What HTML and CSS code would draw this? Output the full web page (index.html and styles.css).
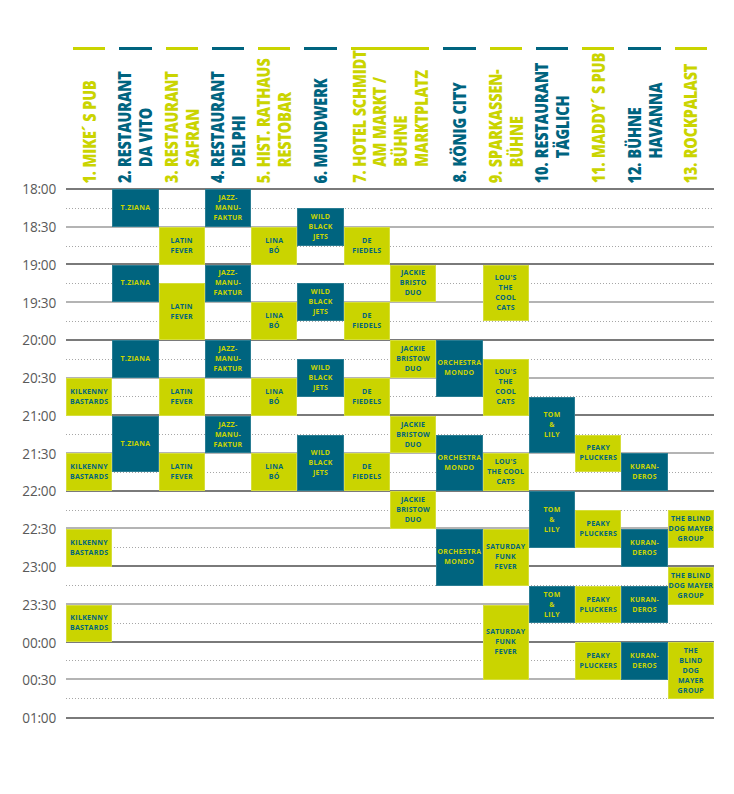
FILE: index.html
```html
<!DOCTYPE html>
<html lang="de">
<head>
<meta charset="utf-8">
<title>Programm</title>
<link rel="stylesheet" href="styles.css">
</head>
<body>
<div class="page">
  <div class="heads">
    <div class="corner"></div>
    <div class="venue y"><div class="bar"></div><div class="title"><div class="vt"><span class="n">1.</span><span class="nm">MIKE´ S PUB</span></div></div></div>
    <div class="venue b"><div class="bar"></div><div class="title"><div class="vt"><span class="n">2.</span><span class="nm">RESTAURANT<br>DA VITO</span></div></div></div>
    <div class="venue y"><div class="bar"></div><div class="title"><div class="vt"><span class="n">3.</span><span class="nm">RESTAURANT<br>SAFRAN</span></div></div></div>
    <div class="venue b"><div class="bar"></div><div class="title"><div class="vt"><span class="n">4.</span><span class="nm">RESTAURANT<br>DELPHI</span></div></div></div>
    <div class="venue y"><div class="bar"></div><div class="title"><div class="vt"><span class="n">5.</span><span class="nm">HIST. RATHAUS<br>RESTOBAR</span></div></div></div>
    <div class="venue b"><div class="bar"></div><div class="title"><div class="vt"><span class="n">6.</span><span class="nm">MUNDWERK</span></div></div></div>
    <div class="venue y wide"><div class="bar"></div><div class="title"><div class="vt"><span class="n">7.</span><span class="nm">HOTEL SCHMIDT<br>AM MARKT /<br>BÜHNE<br>MARKTPLATZ</span></div></div></div>
    <div class="venue b"><div class="bar"></div><div class="title"><div class="vt"><span class="n">8.</span><span class="nm">KÖNIG CITY</span></div></div></div>
    <div class="venue y"><div class="bar"></div><div class="title"><div class="vt"><span class="n">9.</span><span class="nm">SPARKASSEN-<br>BÜHNE</span></div></div></div>
    <div class="venue b"><div class="bar"></div><div class="title"><div class="vt"><span class="n">10.</span><span class="nm">RESTAURANT<br>TÄGLICH</span></div></div></div>
    <div class="venue y"><div class="bar"></div><div class="title"><div class="vt"><span class="n">11.</span><span class="nm">MADDY´ S PUB</span></div></div></div>
    <div class="venue b"><div class="bar"></div><div class="title"><div class="vt"><span class="n">12.</span><span class="nm">BÜHNE<br>HAVANNA</span></div></div></div>
    <div class="venue y"><div class="bar"></div><div class="title"><div class="vt"><span class="n">13.</span><span class="nm">ROCKPALAST</span></div></div></div>
  </div>

  <div class="main">
    <div class="times">
      <div class="t">18:00</div><div class="t">18:30</div><div class="t">19:00</div><div class="t">19:30</div>
      <div class="t">20:00</div><div class="t">20:30</div><div class="t">21:00</div><div class="t">21:30</div>
      <div class="t">22:00</div><div class="t">22:30</div><div class="t">23:00</div><div class="t">23:30</div>
      <div class="t">00:00</div><div class="t">00:30</div><div class="t">01:00</div>
    </div>
    <div class="grid">
      <div class="lines">
        <div class="ln"></div><div class="ln"></div><div class="ln"></div><div class="ln"></div>
        <div class="ln"></div><div class="ln"></div><div class="ln"></div><div class="ln"></div>
        <div class="ln"></div><div class="ln"></div><div class="ln"></div><div class="ln"></div>
        <div class="ln"></div><div class="ln"></div><div class="ln"></div><div class="ln"></div>
        <div class="ln"></div><div class="ln"></div><div class="ln"></div><div class="ln"></div>
        <div class="ln"></div><div class="ln"></div><div class="ln"></div><div class="ln"></div>
        <div class="ln"></div><div class="ln"></div><div class="ln"></div><div class="ln"></div>
      </div>

      <!-- 1 Mike's Pub -->
      <div class="ev y" style="grid-area:11/1/13/2">KILKENNY<br>BASTARDS</div>
      <div class="ev y" style="grid-area:15/1/17/2">KILKENNY<br>BASTARDS</div>
      <div class="ev y" style="grid-area:19/1/21/2">KILKENNY<br>BASTARDS</div>
      <div class="ev y" style="grid-area:23/1/25/2">KILKENNY<br>BASTARDS</div>

      <!-- 2 Da Vito -->
      <div class="ev b" style="grid-area:1/2/3/3">T.ZIANA</div>
      <div class="ev b" style="grid-area:5/2/7/3">T.ZIANA</div>
      <div class="ev b" style="grid-area:9/2/11/3">T.ZIANA</div>
      <div class="ev b" style="grid-area:13/2/16/3">T.ZIANA</div>

      <!-- 3 Safran -->
      <div class="ev y" style="grid-area:3/3/5/4">LATIN<br>FEVER</div>
      <div class="ev y" style="grid-area:6/3/9/4">LATIN<br>FEVER</div>
      <div class="ev y" style="grid-area:11/3/13/4">LATIN<br>FEVER</div>
      <div class="ev y" style="grid-area:15/3/17/4">LATIN<br>FEVER</div>

      <!-- 4 Delphi -->
      <div class="ev b" style="grid-area:1/4/3/5">JAZZ-<br>MANU-<br>FAKTUR</div>
      <div class="ev b" style="grid-area:5/4/7/5">JAZZ-<br>MANU-<br>FAKTUR</div>
      <div class="ev b" style="grid-area:9/4/11/5">JAZZ-<br>MANU-<br>FAKTUR</div>
      <div class="ev b" style="grid-area:13/4/15/5">JAZZ-<br>MANU-<br>FAKTUR</div>

      <!-- 5 Rathaus -->
      <div class="ev y" style="grid-area:3/5/5/6">LINA<br>BÓ</div>
      <div class="ev y" style="grid-area:7/5/9/6">LINA<br>BÓ</div>
      <div class="ev y" style="grid-area:11/5/13/6">LINA<br>BÓ</div>
      <div class="ev y" style="grid-area:15/5/17/6">LINA<br>BÓ</div>

      <!-- 6 Mundwerk -->
      <div class="ev b" style="grid-area:2/6/4/7">WILD<br>BLACK<br>JETS</div>
      <div class="ev b" style="grid-area:6/6/8/7">WILD<br>BLACK<br>JETS</div>
      <div class="ev b" style="grid-area:10/6/12/7">WILD<br>BLACK<br>JETS</div>
      <div class="ev b" style="grid-area:14/6/17/7">WILD<br>BLACK<br>JETS</div>

      <!-- 7 Hotel Schmidt -->
      <div class="ev y" style="grid-area:3/7/5/8">DE<br>FIEDELS</div>
      <div class="ev y" style="grid-area:7/7/9/8">DE<br>FIEDELS</div>
      <div class="ev y" style="grid-area:11/7/13/8">DE<br>FIEDELS</div>
      <div class="ev y" style="grid-area:15/7/17/8">DE<br>FIEDELS</div>

      <!-- 7 Bühne Marktplatz -->
      <div class="ev y" style="grid-area:5/8/7/9">JACKIE<br>BRISTO<br>DUO</div>
      <div class="ev y" style="grid-area:9/8/11/9">JACKIE<br>BRISTOW<br>DUO</div>
      <div class="ev y" style="grid-area:13/8/15/9">JACKIE<br>BRISTOW<br>DUO</div>
      <div class="ev y" style="grid-area:17/8/19/9">JACKIE<br>BRISTOW<br>DUO</div>

      <!-- 8 König City -->
      <div class="ev b" style="grid-area:9/9/12/10">ORCHESTRA<br>MONDO</div>
      <div class="ev b" style="grid-area:14/9/17/10">ORCHESTRA<br>MONDO</div>
      <div class="ev b" style="grid-area:19/9/22/10">ORCHESTRA<br>MONDO</div>

      <!-- 9 Sparkassen-Bühne -->
      <div class="ev y" style="grid-area:5/10/8/11">LOU'S<br>THE<br>COOL<br>CATS</div>
      <div class="ev y" style="grid-area:10/10/13/11">LOU'S<br>THE<br>COOL<br>CATS</div>
      <div class="ev y" style="grid-area:15/10/17/11">LOU'S<br>THE COOL<br>CATS</div>
      <div class="ev y" style="grid-area:19/10/22/11">SATURDAY<br>FUNK<br>FEVER</div>
      <div class="ev y" style="grid-area:23/10/27/11">SATURDAY<br>FUNK<br>FEVER</div>

      <!-- 10 Täglich -->
      <div class="ev b" style="grid-area:12/11/15/12">TOM<br>&amp;<br>LILY</div>
      <div class="ev b" style="grid-area:17/11/20/12">TOM<br>&amp;<br>LILY</div>
      <div class="ev b" style="grid-area:22/11/24/12">TOM<br>&amp;<br>LILY</div>

      <!-- 11 Maddy's Pub -->
      <div class="ev y" style="grid-area:14/12/16/13">PEAKY<br>PLUCKERS</div>
      <div class="ev y" style="grid-area:18/12/20/13">PEAKY<br>PLUCKERS</div>
      <div class="ev y" style="grid-area:22/12/24/13">PEAKY<br>PLUCKERS</div>
      <div class="ev y" style="grid-area:25/12/27/13">PEAKY<br>PLUCKERS</div>

      <!-- 12 Havanna -->
      <div class="ev b" style="grid-area:15/13/17/14">KURAN-<br>DEROS</div>
      <div class="ev b" style="grid-area:19/13/21/14">KURAN-<br>DEROS</div>
      <div class="ev b" style="grid-area:22/13/24/14">KURAN-<br>DEROS</div>
      <div class="ev b" style="grid-area:25/13/27/14">KURAN-<br>DEROS</div>

      <!-- 13 Rockpalast -->
      <div class="ev y" style="grid-area:18/14/20/15">THE BLIND<br>DOG MAYER<br>GROUP</div>
      <div class="ev y" style="grid-area:21/14/23/15">THE BLIND<br>DOG MAYER<br>GROUP</div>
      <div class="ev y" style="grid-area:25/14/28/15">THE<br>BLIND<br>DOG<br>MAYER<br>GROUP</div>
    </div>
  </div>
</div>
</body>
</html>
```

FILE: styles.css
```css
* { box-sizing: border-box; }

html, body {
  margin: 0;
  background: #ffffff;
}

body {
  font-family: "Open Sans", "Liberation Sans", sans-serif;
}

.page {
  width: 734px;
  padding-bottom: 60px;
}

/* ---------- venue headers ---------- */
.heads {
  display: grid;
  grid-template-columns: 66px repeat(14, 1fr);
  width: 714px;
  padding-top: 47px;
}

.venue {
  display: flex;
  flex-direction: column;
}

.venue.wide {
  grid-column: span 2;
}

.bar {
  height: 3px;
  margin: 0 7px;
}

.venue.y .bar { background: #cad400; }
.venue.b .bar { background: #00647f; }
.venue.y { color: #cad400; }
.venue.b { color: #00647f; }

.title {
  height: 133px;
  margin-bottom: 6px;
  display: flex;
  justify-content: center;
  align-items: flex-end;
}

.vt {
  writing-mode: vertical-rl;
  display: flex;
  align-items: flex-start;
  transform: rotate(180deg) scaleX(1.22);
  white-space: nowrap;
  font-weight: 800;
  font-size: 14.4px;
  line-height: 17px;
  letter-spacing: -0.1px;
}

.vt .n {
  margin-inline-end: 4px;
}

/* ---------- main grid ---------- */
.main {
  display: grid;
  grid-template-columns: 66px 648px;
  align-items: start;
}

.times {
  display: flex;
  flex-direction: column;
  margin-top: -18.9px;
}

.t {
  height: 37.8px;
  line-height: 37.8px;
  text-align: right;
  padding-right: 10px;
  font-size: 13.6px;
  color: #5a5a5a;
  letter-spacing: -0.2px;
}

.grid {
  display: grid;
  grid-template-columns: repeat(14, 1fr);
  grid-template-rows: repeat(28, 18.9px);
}

.lines {
  grid-column: 1 / -1;
  grid-row: 1 / -1;
  display: grid;
  grid-template-rows: repeat(28, 1fr);
  border-bottom: 2px solid #7a7a7a;
  margin-bottom: -1px;
}

.ln {
  background-image: linear-gradient(to right, #a6a6a6 1px, transparent 1px);
  background-size: 3px 1px;
  background-repeat: repeat-x;
  background-position: 0 0;
}

.ln:nth-child(4n+1) {
  background: none;
  border-top: 2px solid #7a7a7a;
  margin-top: -1px;
}

.ln:nth-child(4n+3) {
  background: none;
  border-top: 2px solid #b4b4b4;
  margin-top: -1px;
}

/* ---------- events ---------- */
.ev {
  display: flex;
  align-items: center;
  justify-content: center;
  text-align: center;
  font-size: 7px;
  line-height: 10px;
  font-weight: 700;
  letter-spacing: 0.3px;
  white-space: nowrap;
  overflow: hidden;
}

.ev.y {
  background: #cad400;
  color: #00647f;
  box-shadow: inset 0 0 0 1px #d6de3c;
}

.ev.b {
  background: #00647f;
  color: #cad400;
  box-shadow: inset 0 0 0 1px #2a7d93;
}
```
